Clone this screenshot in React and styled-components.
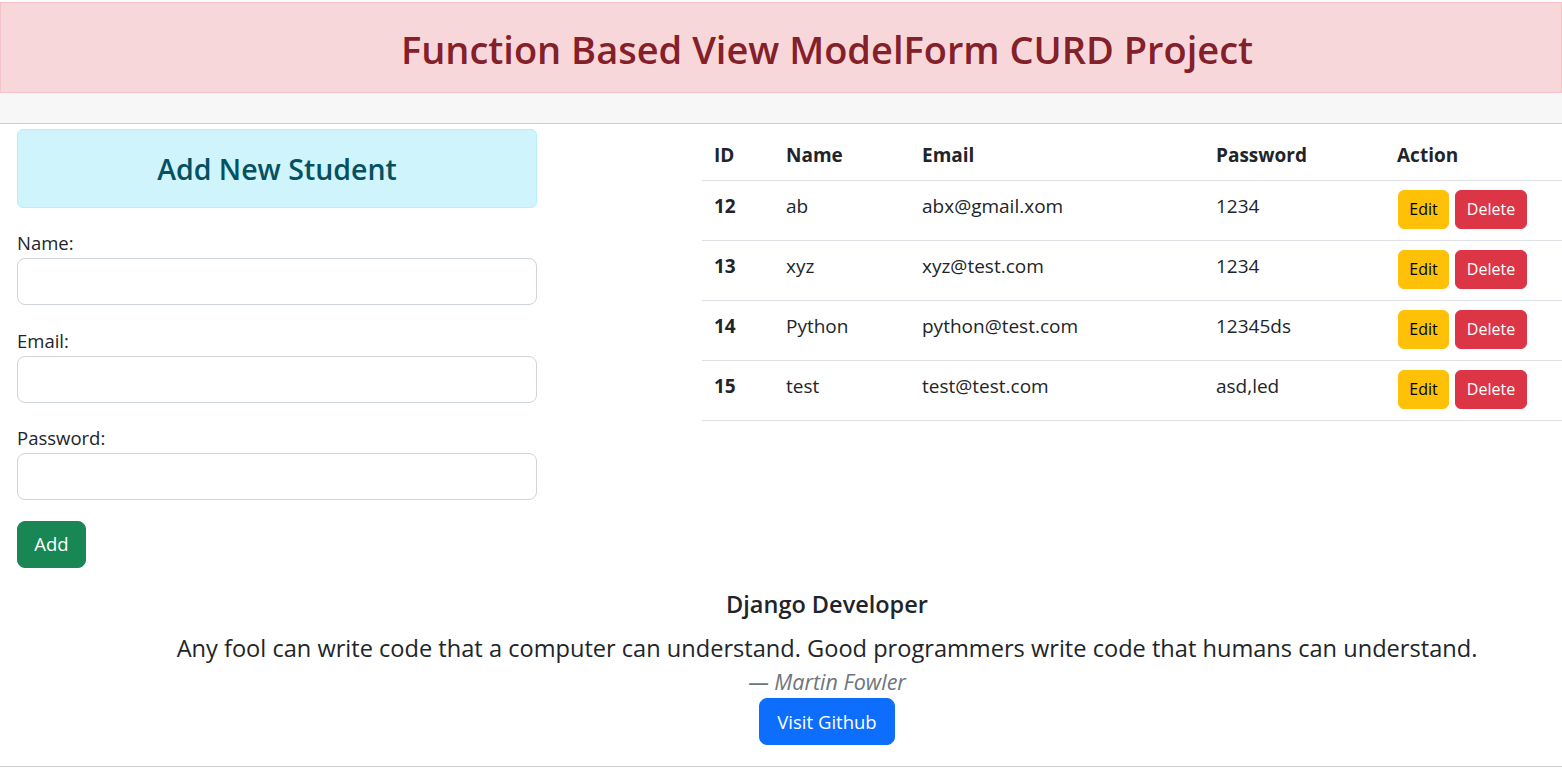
import React from 'react';
import styled, { createGlobalStyle } from 'styled-components';

const FONT = `"Open Sans", "Noto Sans", "Liberation Sans", sans-serif`;

const GlobalStyle = createGlobalStyle`
  html, body { margin: 0; padding: 0; background: #fff; }
  body { font-family: ${FONT}; color: #212529; }
  *, *::before, *::after { box-sizing: border-box; }
`;

const Page = styled.div`
  width: 100%;
  padding-top: 2px;
`;

const Banner = styled.header`
  height: 91px;
  background: #f8d7da;
  border: 1px solid #f5c2c7;
  color: #842029;
  display: flex;
  align-items: center;
  justify-content: center;
  padding: 4px 0 0 92px;
`;

const Title = styled.h1`
  margin: 0;
  font-size: 38px;
  font-weight: 600;
  line-height: 1.2;
  white-space: nowrap;
`;

const SubBar = styled.div`
  height: 31px;
  background: #f7f7f7;
  border-bottom: 1px solid #ccc;
`;

const Main = styled.main`
  display: flex;
  align-items: flex-start;
  padding-top: 5px;
`;

const FormColumn = styled.section`
  width: 520px;
  flex: none;
  margin-left: 17px;
`;

const InfoBox = styled.div`
  height: 79px;
  background: #cff4fc;
  border: 1px solid #b6effb;
  border-radius: 6px;
  color: #055160;
  display: flex;
  align-items: center;
  justify-content: center;
  padding-top: 2px;
  margin-bottom: 23px;
`;

const InfoTitle = styled.h2`
  margin: 0;
  font-size: 28.5px;
  font-weight: 600;
  line-height: 1.2;
`;

const Field = styled.div`
  margin-bottom: 23.5px;
`;

const Label = styled.label`
  display: block;
  font-size: 18.5px;
  line-height: 26px;
  margin-top: -1px;
  padding-bottom: 1px;
  margin-bottom: 1px;
`;

const Input = styled.input`
  display: block;
  width: 100%;
  height: 47px;
  border: 1px solid #ced4da;
  border-radius: 8px;
  background: #fff;
  padding: 8px 16px;
  font-family: ${FONT};
  font-size: 18px;
  outline: none;
`;

const Button = styled.button`
  display: inline-flex;
  align-items: center;
  justify-content: center;
  border: 1px solid ${p => p.$bg};
  background: ${p => p.$bg};
  color: ${p => p.$fg || '#fff'};
  font-family: ${FONT};
  font-size: ${p => (p.$lg ? '18.5px' : '16px')};
  line-height: 1.5;
  height: ${p => (p.$lg ? '47px' : '39px')};
  width: ${p => p.$w}px;
  padding: 0;
  border-radius: ${p => (p.$lg ? '8px' : '6px')};
  cursor: pointer;
`;

const AddButton = styled(Button)`
  margin-top: -3px;
`;

const TableColumn = styled.section`
  margin-left: 165px;
  flex: 1;
  margin-top: 1px;
`;

const Table = styled.table`
  width: 100%;
  border-collapse: collapse;
  table-layout: fixed;
  font-size: 19px;
`;

const HeadCell = styled.th`
  text-align: left;
  font-weight: 700;
  height: 50px;
  padding: 0 12px;
  vertical-align: middle;
  border-bottom: 1px solid #dee2e6;
`;

const Row = styled.tr`
  height: 60px;
  border-bottom: 1px solid #dee2e6;
`;

const Cell = styled.td`
  padding: 0 12px 9px;
  vertical-align: middle;
  font-weight: ${p => (p.$bold ? 700 : 400)};
`;

const ActionCell = styled.td`
  padding: 0 12px 2px;
  vertical-align: middle;
`;

const Actions = styled.div`
  display: flex;
  gap: 6px;
  padding-left: 1px;
`;

const Footer = styled.footer`
  margin-top: 21px;
  text-align: center;
  padding: 0 0 21px 92px;
  border-bottom: 1px solid #ccc;
`;

const Role = styled.h4`
  margin: 0 0 11px;
  font-size: 23.5px;
  font-weight: 600;
  line-height: 1.3;
`;

const QuoteFigure = styled.figure`
  margin: 0;
`;

const Quote = styled.blockquote`
  margin: 0;
  font-size: 23.6px;
  line-height: 36px;
`;

const Author = styled.figcaption`
  font-size: 21.5px;
  line-height: 30px;
  font-style: italic;
  color: #6c757d;
  margin: 1px 0 1px;
`;

const GithubButton = styled(Button)``;

const students = [
  { id: 12, name: 'ab', email: 'abx@gmail.xom', password: '1234' },
  { id: 13, name: 'xyz', email: 'xyz@test.com', password: '1234' },
  { id: 14, name: 'Python', email: 'python@test.com', password: '12345ds' },
  { id: 15, name: 'test', email: 'test@test.com', password: 'asd,led' },
];

export default function App() {
  return (
    <>
      <GlobalStyle />
      <Page>
        <Banner>
          <Title>Function Based View ModelForm CURD Project</Title>
        </Banner>
        <SubBar />
        <Main>
          <FormColumn>
            <InfoBox>
              <InfoTitle>Add New Student</InfoTitle>
            </InfoBox>
            <form onSubmit={e => e.preventDefault()}>
              <Field>
                <Label htmlFor="name">Name:</Label>
                <Input id="name" type="text" />
              </Field>
              <Field>
                <Label htmlFor="email">Email:</Label>
                <Input id="email" type="email" />
              </Field>
              <Field>
                <Label htmlFor="password">Password:</Label>
                <Input id="password" type="password" />
              </Field>
              <AddButton type="submit" $lg $bg="#198754" $w={69}>Add</AddButton>
            </form>
          </FormColumn>
          <TableColumn>
            <Table>
              <colgroup>
                <col style={{ width: 72 }} />
                <col style={{ width: 136 }} />
                <col style={{ width: 294 }} />
                <col style={{ width: 181 }} />
                <col />
              </colgroup>
              <thead>
                <tr>
                  <HeadCell>ID</HeadCell>
                  <HeadCell>Name</HeadCell>
                  <HeadCell>Email</HeadCell>
                  <HeadCell>Password</HeadCell>
                  <HeadCell>Action</HeadCell>
                </tr>
              </thead>
              <tbody>
                {students.map(s => (
                  <Row key={s.id}>
                    <Cell $bold>{s.id}</Cell>
                    <Cell>{s.name}</Cell>
                    <Cell>{s.email}</Cell>
                    <Cell>{s.password}</Cell>
                    <ActionCell>
                      <Actions>
                        <Button $bg="#ffc107" $fg="#000" $w={51}>Edit</Button>
                        <Button $bg="#dc3545" $w={72}>Delete</Button>
                      </Actions>
                    </ActionCell>
                  </Row>
                ))}
              </tbody>
            </Table>
          </TableColumn>
        </Main>
        <Footer>
          <Role>Django Developer</Role>
          <QuoteFigure>
            <Quote>Any fool can write code that a computer can understand. Good programmers write code that humans can understand.</Quote>
            <Author>— Martin Fowler</Author>
          </QuoteFigure>
          <GithubButton $lg $bg="#0d6efd" $w={136}>Visit Github</GithubButton>
        </Footer>
      </Page>
    </>
  );
}
